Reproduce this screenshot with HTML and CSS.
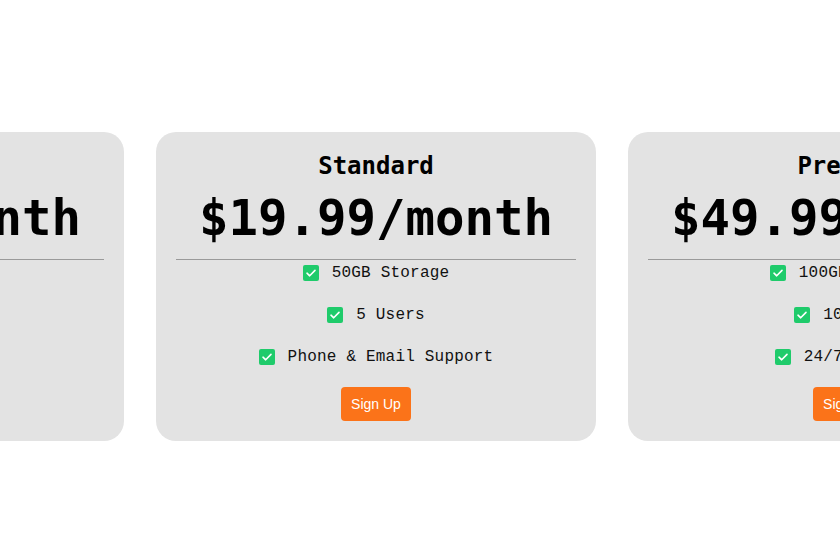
FILE: index.html
```html
<!DOCTYPE html>
<html>
<head>
<meta charset="utf-8">
<link rel="stylesheet" href="styles.css">
</head>
<body>
<div class="plans">
  <div class="card">
    <h2 class="name">Basic</h2>
    <div class="price">$10.00/month</div>
    <hr class="rule">
    <ul class="features">
      <li><span class="check"><svg viewBox="0 0 16 16" width="16" height="16"><rect width="16" height="16" rx="2" fill="#1fcb6b"/><path d="M4 8.2l2.7 2.6L12 5.4" fill="none" stroke="#fff" stroke-width="1.6" stroke-linecap="round" stroke-linejoin="round"/></svg></span>10GB Storage</li>
      <li><span class="check"><svg viewBox="0 0 16 16" width="16" height="16"><rect width="16" height="16" rx="2" fill="#1fcb6b"/><path d="M4 8.2l2.7 2.6L12 5.4" fill="none" stroke="#fff" stroke-width="1.6" stroke-linecap="round" stroke-linejoin="round"/></svg></span>1 User</li>
      <li><span class="check"><svg viewBox="0 0 16 16" width="16" height="16"><rect width="16" height="16" rx="2" fill="#1fcb6b"/><path d="M4 8.2l2.7 2.6L12 5.4" fill="none" stroke="#fff" stroke-width="1.6" stroke-linecap="round" stroke-linejoin="round"/></svg></span>Email Support</li>
    </ul>
    <button class="signup">Sign Up</button>
  </div>
  <div class="card">
    <h2 class="name">Standard</h2>
    <div class="price">$19.99/month</div>
    <hr class="rule">
    <ul class="features">
      <li><span class="check"><svg viewBox="0 0 16 16" width="16" height="16"><rect width="16" height="16" rx="2" fill="#1fcb6b"/><path d="M4 8.2l2.7 2.6L12 5.4" fill="none" stroke="#fff" stroke-width="1.6" stroke-linecap="round" stroke-linejoin="round"/></svg></span>50GB Storage</li>
      <li><span class="check"><svg viewBox="0 0 16 16" width="16" height="16"><rect width="16" height="16" rx="2" fill="#1fcb6b"/><path d="M4 8.2l2.7 2.6L12 5.4" fill="none" stroke="#fff" stroke-width="1.6" stroke-linecap="round" stroke-linejoin="round"/></svg></span>5 Users</li>
      <li><span class="check"><svg viewBox="0 0 16 16" width="16" height="16"><rect width="16" height="16" rx="2" fill="#1fcb6b"/><path d="M4 8.2l2.7 2.6L12 5.4" fill="none" stroke="#fff" stroke-width="1.6" stroke-linecap="round" stroke-linejoin="round"/></svg></span>Phone &amp; Email Support</li>
    </ul>
    <button class="signup">Sign Up</button>
  </div>
  <div class="card">
    <h2 class="name">Premium</h2>
    <div class="price">$49.99/month</div>
    <hr class="rule">
    <ul class="features">
      <li><span class="check"><svg viewBox="0 0 16 16" width="16" height="16"><rect width="16" height="16" rx="2" fill="#1fcb6b"/><path d="M4 8.2l2.7 2.6L12 5.4" fill="none" stroke="#fff" stroke-width="1.6" stroke-linecap="round" stroke-linejoin="round"/></svg></span>100GB Storage</li>
      <li><span class="check"><svg viewBox="0 0 16 16" width="16" height="16"><rect width="16" height="16" rx="2" fill="#1fcb6b"/><path d="M4 8.2l2.7 2.6L12 5.4" fill="none" stroke="#fff" stroke-width="1.6" stroke-linecap="round" stroke-linejoin="round"/></svg></span>10 Users</li>
      <li><span class="check"><svg viewBox="0 0 16 16" width="16" height="16"><rect width="16" height="16" rx="2" fill="#1fcb6b"/><path d="M4 8.2l2.7 2.6L12 5.4" fill="none" stroke="#fff" stroke-width="1.6" stroke-linecap="round" stroke-linejoin="round"/></svg></span>24/7 Support</li>
    </ul>
    <button class="signup">Sign Up</button>
  </div>
</div>
</body>
</html>
```
FILE: styles.css
```css
html, body {
  margin: 0;
  padding: 0;
  background: #ffffff;
  overflow: hidden;
}
body {
  width: 840px;
  height: 545px;
}
.plans {
  display: flex;
  gap: 32px;
  margin-left: -316px;
  padding-top: 132px;
}
.card {
  flex: 0 0 440px;
  box-sizing: border-box;
  width: 440px;
  height: 309px;
  padding: 20px;
  background: #e3e3e3;
  border-radius: 20px;
  display: flex;
  flex-direction: column;
  align-items: center;
}
.name {
  margin: 0;
  font-family: "DejaVu Sans Mono", monospace;
  font-weight: bold;
  font-size: 24px;
  line-height: 28px;
  color: #000;
}
.price {
  margin-top: 11px;
  font-family: "DejaVu Sans Mono", monospace;
  font-weight: bold;
  font-size: 49px;
  line-height: 56px;
  color: #000;
}
.rule {
  align-self: stretch;
  margin: 12px 0 0;
  border: 0;
  border-top: 1px solid #9a9a9a;
  height: 0;
}
.features {
  list-style: none;
  margin: 0;
  padding: 1px 0 0;
  display: flex;
  flex-direction: column;
  align-items: center;
  gap: 18px;
}
.features li {
  display: flex;
  align-items: center;
  gap: 13px;
  height: 24px;
  font-family: "Liberation Mono", monospace;
  font-size: 16px;
  letter-spacing: 0.2px;
  color: #111;
}
.check {
  display: flex;
  width: 16px;
  height: 16px;
}
.signup {
  margin-top: 18px;
  padding: 0 10px;
  height: 34px;
  border: 0;
  border-radius: 4px;
  background: #fb7319;
  color: #fff;
  font-family: "Liberation Sans", Arial, sans-serif;
  font-size: 14px;
}
```
